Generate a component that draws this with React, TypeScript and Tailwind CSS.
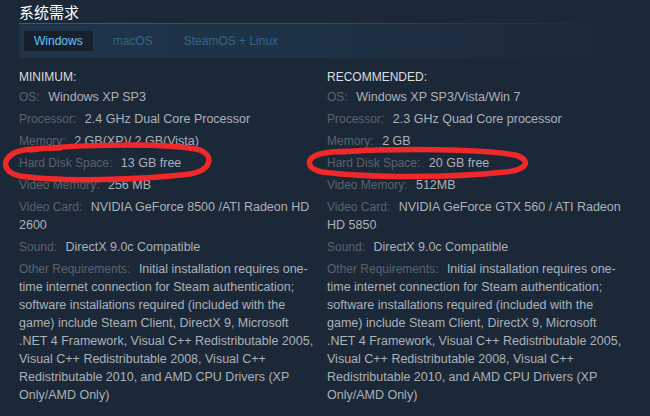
import React from 'react';

type Row = { label: string; value: string };

const otherReq =
  'Initial installation requires one-time internet connection for Steam authentication; software installations required (included with the game) include Steam Client, DirectX 9, Microsoft .NET 4 Framework, Visual C++ Redistributable 2005, Visual C++ Redistributable 2008, Visual C++ Redistributable 2010, and AMD CPU Drivers (XP Only/AMD Only)';

const minimum: Row[] = [
  { label: 'OS:', value: 'Windows XP SP3' },
  { label: 'Processor:', value: '2.4 GHz Dual Core Processor' },
  { label: 'Memory:', value: '2 GB(XP)/ 2 GB(Vista)' },
  { label: 'Hard Disk Space:', value: '13 GB free' },
  { label: 'Video Memory:', value: '256 MB' },
  { label: 'Video Card:', value: 'NVIDIA GeForce 8500 /ATI Radeon HD 2600' },
  { label: 'Sound:', value: 'DirectX 9.0c Compatible' },
  { label: 'Other Requirements:', value: otherReq },
];

const recommended: Row[] = [
  { label: 'OS:', value: 'Windows XP SP3/Vista/Win 7' },
  { label: 'Processor:', value: '2.3 GHz Quad Core processor' },
  { label: 'Memory:', value: '2 GB' },
  { label: 'Hard Disk Space:', value: '20 GB free' },
  { label: 'Video Memory:', value: '512MB' },
  { label: 'Video Card:', value: 'NVIDIA GeForce GTX 560 / ATI Radeon HD 5850' },
  { label: 'Sound:', value: 'DirectX 9.0c Compatible' },
  { label: 'Other Requirements:', value: otherReq },
];

const ReqColumn = ({ title, rows }: { title: string; rows: Row[] }) => (
  <div className="w-[297px] shrink-0">
    <div className="text-[12px] leading-[16px] uppercase text-[#dcdedf] mb-[3px]">{title}</div>
    <ul className="flex flex-col gap-[4px]">
      {rows.map((r) => (
        <li key={r.label} className="text-[12.5px] leading-[18px] text-[#acb2b8]">
          <span className="text-[12px] text-[#5b636b] mr-[5px]">{r.label}</span> {r.value}
        </li>
      ))}
    </ul>
  </div>
);

export default function App() {
  return (
    <div
      className="relative w-[650px] h-[416px] overflow-hidden bg-[#1b2838]"
      style={{ fontFamily: '"Liberation Sans", Arial, "Noto Sans CJK SC", sans-serif' }}
    >
      <div className="pl-[19px] pr-[30px] pt-[2px]">
        <h2
          className="text-[15px] leading-[20px] text-white pb-[1px]"
          style={{ fontFamily: '"Noto Sans CJK SC", sans-serif' }}
        >
          系统需求
        </h2>
        <div className="h-px bg-gradient-to-r from-[#3a5a78] via-[#2e4a66] to-transparent" />
        <div className="flex items-center h-[34px] pl-[5px] bg-gradient-to-r from-[#1f3449] via-[#1e3245] to-[#1b2838] text-[12px]">
          <div className="px-[10px] h-[20px] flex items-center bg-[#17212e] text-[#67c1f5]">Windows</div>
          <div className="ml-[20px] text-[#356488]">macOS</div>
          <div className="ml-[31px] text-[#356488]">SteamOS + Linux</div>
        </div>
        <div className="flex gap-[11px] pt-[11px]">
          <ReqColumn title="Minimum:" rows={minimum} />
          <ReqColumn title="Recommended:" rows={recommended} />
        </div>
      </div>

      {/* red marker circles drawn over the screenshot */}
      <svg className="absolute left-0 top-0 pointer-events-none" width="650" height="416">
        <path
          d="M 30 150 C 80 144, 170 143, 200 150 C 214 156, 212 170, 190 174 C 140 180, 60 182, 20 176 C 2 172, 2 160, 14 153 C 22 149, 40 148, 60 148"
          fill="none"
          stroke="#f0282a"
          strokeWidth="5.5"
          strokeLinecap="round"
        />
        <path
          d="M 340 152 C 400 148, 480 149, 515 155 C 532 160, 528 170, 505 172 C 450 178, 370 178, 322 172 C 305 168, 306 158, 320 154 C 330 151, 345 151, 360 151"
          fill="none"
          stroke="#f0282a"
          strokeWidth="5.5"
          strokeLinecap="round"
        />
      </svg>
    </div>
  );
}
